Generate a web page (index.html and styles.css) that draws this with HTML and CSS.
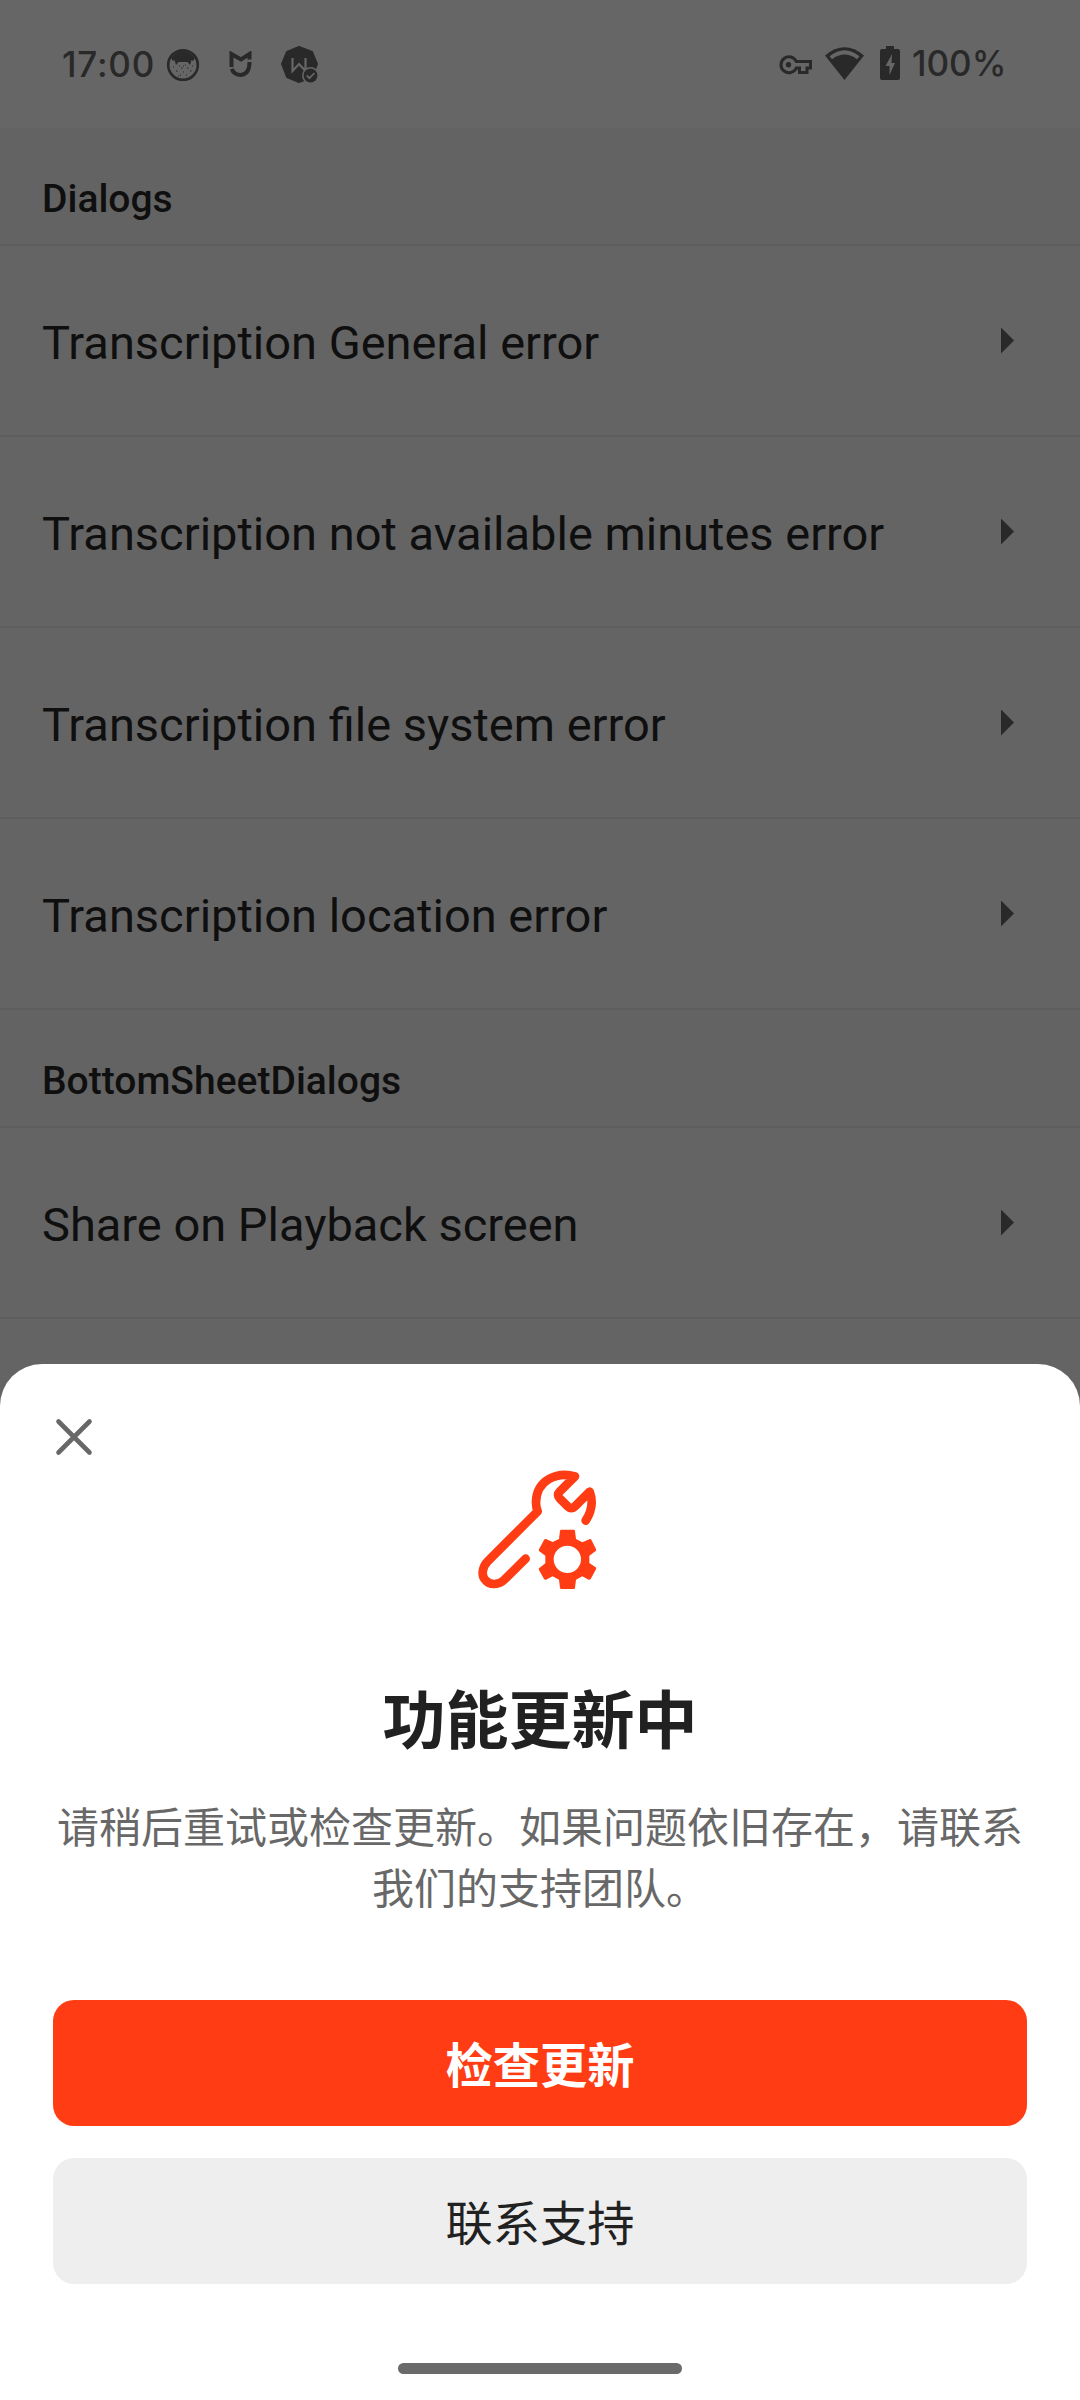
FILE: index.html
```html
<!DOCTYPE html>
<html lang="zh-CN">
<head>
<meta charset="utf-8">
<title>Dialogs</title>
<link rel="stylesheet" href="styles.css">
</head>
<body>
<div class="screen">
  <header class="status">
    <span class="clock">17:00</span>
    <svg class="ic-cat" width="34" height="34" viewBox="0 0 34 34"><circle cx="17" cy="17" r="14.8" fill="none" stroke="#292929" stroke-width="2.600"/><path d="M5 10Q17-4 29 10L27 13L25.500 12L24 17L21.500 14H12.500L10 17L8.500 12L7 13Z" fill="#292929"/><path d="M7 19h1M13 18h1M19 17h1M15 20h1.500M21 20h1.500M26 18h1M10 23h1.500M17 24h1M14 27h1M20 27h1M24 23h1.500M12 28h1M17 18h1" stroke="#3c3c3c" stroke-width="1.300"/></svg>
    <svg class="ic-mi" width="24" height="27" viewBox="0 0 24 27"><path d="M2.500 16V3L12 8.500L20.500 3V8.500M2.700 18Q5 24 12 24Q20.500 23 20.500 11" fill="none" stroke="#292929" stroke-width="4"/></svg>
    <svg class="ic-w" width="38" height="38" viewBox="0 0 38 38"><path d="M18 1L31 6L36 18L31 31L18 36L6 31L1 18L6 6Z" fill="#292929" stroke="#292929" stroke-width="2" stroke-linejoin="round"/><path d="M11.500 12V25L18 18L24.500 25V12" fill="none" stroke="#666" stroke-width="2.200"/><circle cx="29.500" cy="29.500" r="8.500" fill="#666"/><circle cx="29.500" cy="29.500" r="6.900" fill="#292929"/><path d="M25.800 29.500L28.500 32.200L33.500 27" fill="none" stroke="#666" stroke-width="1.800"/></svg>
    <span class="spacer"></span>
    <svg class="ic-key" width="34" height="20" viewBox="0 0 34 20"><path d="M17.300 6.500H31.500V13H28V17.500H20.500V13H17.300A8 8 0 1 1 17.300 6.500Z" fill="none" stroke="#292929" stroke-width="3"/><circle cx="9.500" cy="9.700" r="2.700" fill="#292929"/></svg>
    <svg class="ic-wifi" width="39" height="33" viewBox="0 0 39 33"><path d="M0 8.500Q19.500-8 39 8.500L19.500 33Z" fill="#292929"/><path d="M4.500 9.300Q19.500-3 34.500 9.300L32 12.200Q19.500 3 7 12.200Z" fill="#666"/></svg>
    <svg class="ic-bat" width="20" height="34" viewBox="0 0 20 34"><path d="M6 0H14V3H18Q20 3 20 5V32Q20 34 18 34H2Q0 34 0 32V5Q0 3 2 3H6Z" fill="#292929"/><path d="M12 8L5.500 20H9.500V29L15 17H11.500Z" fill="#666"/></svg>
    <span class="pct">100%</span>
  </header>
  <main>
    <h2 class="group">Dialogs</h2>
    <div class="row"><span>Transcription General error</span><i class="arrow"></i></div>
    <div class="row"><span>Transcription not available minutes error</span><i class="arrow"></i></div>
    <div class="row"><span>Transcription file system error</span><i class="arrow"></i></div>
    <div class="row"><span>Transcription location error</span><i class="arrow"></i></div>
    <h2 class="group">BottomSheetDialogs</h2>
    <div class="row"><span>Share on Playback screen</span><i class="arrow"></i></div>
  </main>
  <section class="sheet">
    <svg class="close" width="38" height="38" viewBox="0 0 38 38"><path d="M3.500 3.500L34.500 34.500M34.500 3.500L3.500 34.500" stroke="#686868" stroke-width="4.600" stroke-linecap="round"/></svg>
    <svg class="tool" width="200" height="170" viewBox="0 0 600 510" fill="none"><path d="M437 242C455 214 461 186 449 155L405 199Q394 210 383 199L359 175Q349 165 359 155L405 109C352 94 289 120 288 187Q288 203 293 214L143 364C128 379 122 406 136 420C150 438 178 434 192 420L257 356" stroke="#ff3c13" stroke-width="26" stroke-linecap="round" stroke-linejoin="round"/><path fill-rule="evenodd" fill="#ff3c13" d="M364 269H401Q405 269 405 273L408 297L427 307L448 298Q452 296 454 299L468 327Q470 331 467 333L448 347V369L467 382Q470 384 468 388L452 417Q450 420 446 419L427 409L408 419L405 443Q405 447 401 447H364Q360 447 360 443L357 419L338 409L318 419Q314 420 312 417L297 390Q295 386 298 384L316 370V347L298 334Q295 332 297 328L312 300Q314 296 318 297L338 306L357 297L360 273Q360 269 364 269ZM382 317A41 41 0 1 0 382 399A41 41 0 1 0 382 317Z"/></svg>
    <h1>功能更新中</h1>
    <p>请稍后重试或检查更新。如果问题依旧存在，请联系我们的支持团队。</p>
    <button class="btn primary">检查更新</button>
    <button class="btn">联系支持</button>
    <div class="pill"></div>
  </section>
</div>
</body>
</html>
```
FILE: styles.css
```css
* { box-sizing: border-box; }
body { margin: 0; background: #666; }
.screen {
  width: 1080px; height: 2400px; overflow: hidden;
  display: flex; flex-direction: column;
  background: #646464; color: #0f0f0f;
  font-family: Roboto, "Noto Sans CJK SC", sans-serif;
}
.status {
  flex: none; height: 128px; padding: 0 76px 0 62px;
  display: flex; align-items: flex-start;
  background: #666; color: #292929;
  font-family: Inter, sans-serif; font-size: 35px; font-weight: 500; line-height: 42px;
}
.clock { width: 104px; margin-top: 43px; letter-spacing: 0.8px; }
.pct { width: 92px; margin-top: 42px; margin-left: 12px; white-space: nowrap; }
.spacer { flex: 1; }
.ic-cat { margin-top: 48px; }
.ic-mi { margin: 51px 0 0 29px; }
.ic-w { margin: 46px 0 0 28px; }
.ic-key { margin-top: 55px; }
.ic-wifi { margin: 47px 0 0 12px; }
.ic-bat { margin: 46px 0 0 16px; }
main { flex: none; height: 1278px; margin-bottom: -42px; }
.group {
  height: 118px; margin: 0; padding: 48px 42px 0;
  background: #636363; border-bottom: 2px solid #5e5e5e;
  font-size: 39px; font-weight: 500; line-height: 46px;
}
.row {
  height: 191px; padding: 0 66px 0 42px;
  display: flex; align-items: center; justify-content: space-between;
  border-bottom: 2px solid #5e5e5e; font-size: 47px; line-height: 56px;
}
.row span { padding-top: 4px; }
.arrow { width: 13px; height: 26px; background: #292929; clip-path: polygon(0 0, 100% 50%, 0 100%); }
.sheet {
  flex: none; height: 1036px; padding: 0 53px;
  display: flex; flex-direction: column; align-items: center;
  position: relative; background: #fff; border-radius: 42px 42px 0 0;
}
.close { align-self: flex-start; margin: 54px 0 0 2px; flex: none; }
.tool { margin-top: -16px; flex: none; }
h1 { margin: 67px 0 0; font-size: 63px; line-height: 90px; font-weight: 700; color: #212121; }
p { width: 970px; margin: 31px 0 0; text-align: center; font-size: 42px; line-height: 61px; color: #686868; }
.btn {
  flex: none; width: 974px; height: 126px; margin: 32px 0 0; padding: 8px 0 0; border: 0; border-radius: 21px;
  background: #eee; color: #212121; font: 400 47.25px/70px Roboto, "Noto Sans CJK SC", sans-serif;
}
.primary { margin-top: 80px; background: #ff3c13; color: #fff; font-weight: 700; }
.pill { width: 284px; height: 11px; margin-top: 79px; border-radius: 6px; background: #6a6a6a; }
```
